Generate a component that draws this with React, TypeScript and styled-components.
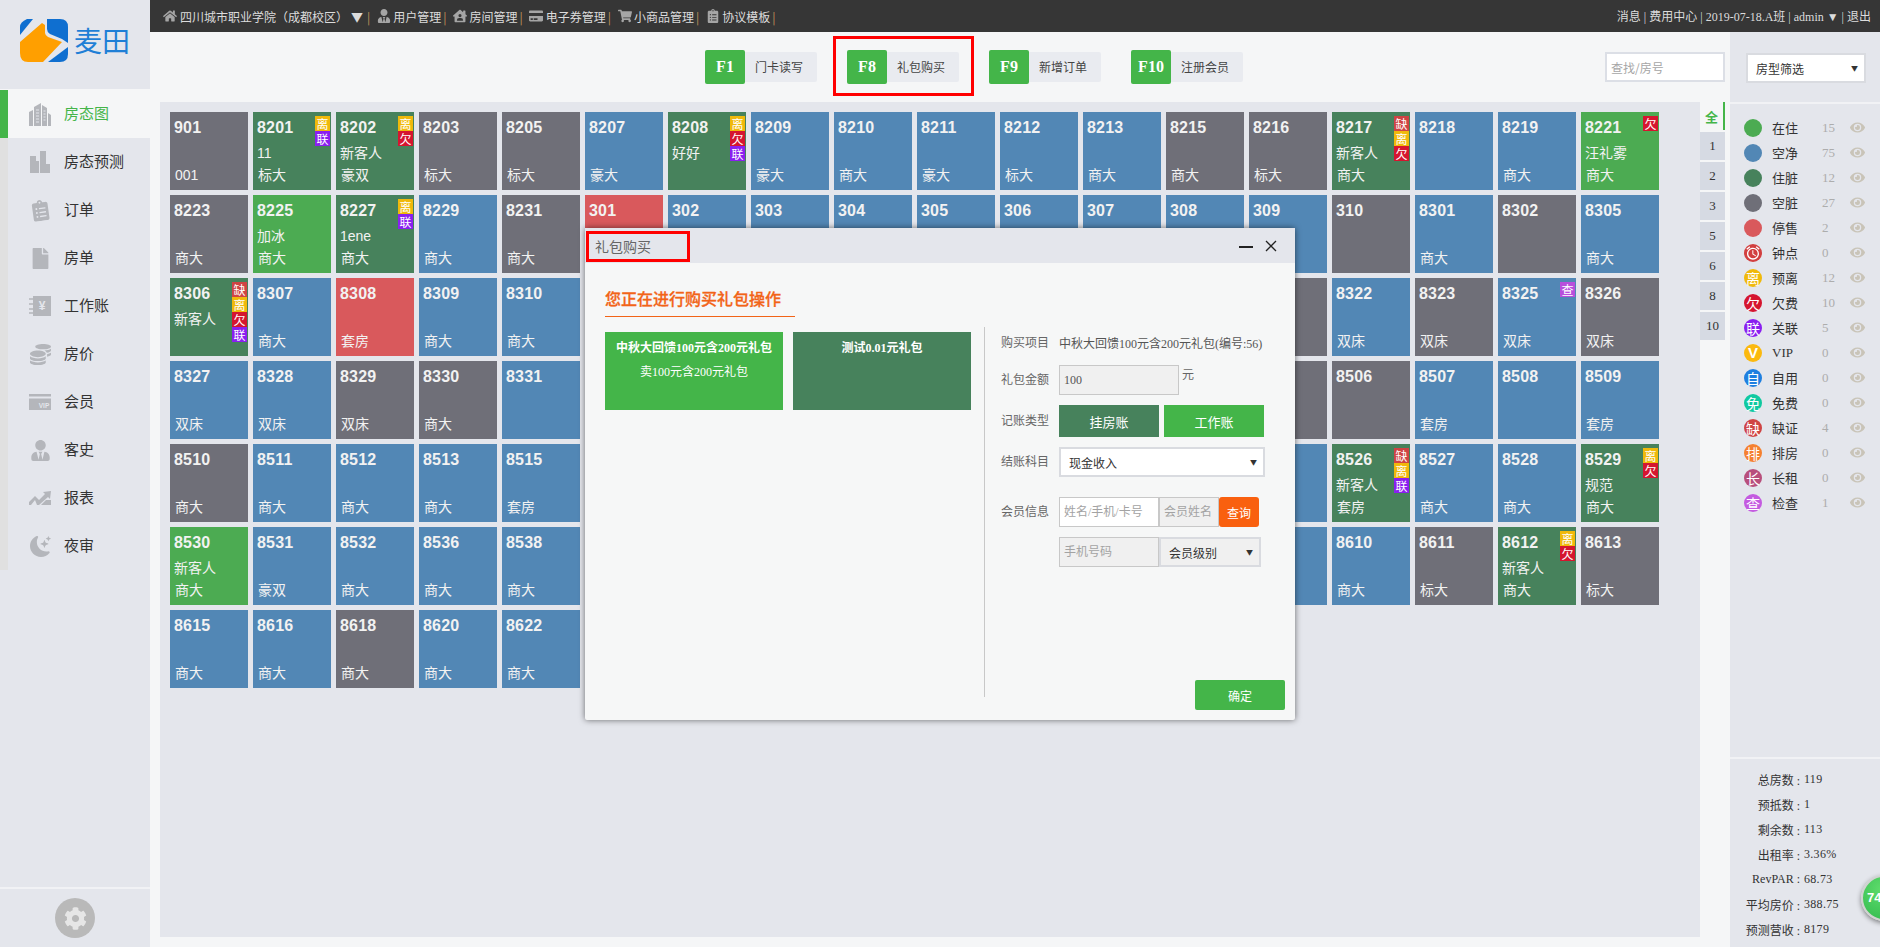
import React from "react";
import styled, { createGlobalStyle } from "styled-components";
import {
  FaHome,
  FaUserTie,
  FaCreditCard,
  FaShoppingCart,
  FaClipboardList,
  FaFile,
  FaCoins,
  FaCog,
  FaEye,
  FaHouseUser,
} from "react-icons/fa";
import { BsMoonStarsFill } from "react-icons/bs";
import { MdAlarm } from "react-icons/md";

const GREEN = "#44b549";
const DARK_GREEN = "#47825c";
const ORANGE = "#f9600f";
const PANEL = "#e4e6ec";
const PAGE = "#f5f6f7";
const CJK = `"Noto Sans CJK SC", sans-serif`;
const SERIF = `"Liberation Serif", "Noto Sans CJK SC", serif`;

const statusColors: Record<string, string> = {
  clean: "#5287b5",
  dirty: "#6f6f78",
  stay: "#47825c",
  live: "#4cab52",
  stop: "#d9595c",
};

const tagColors: Record<string, string> = {
  离: "#f0b90b",
  联: "#8a1ff0",
  欠: "#d5152f",
  缺: "#cf4444",
  查: "#b84fdc",
};

const GlobalStyle = createGlobalStyle`
  html, body {
    margin: 0;
    height: 100%;
    overflow: hidden;
    background: ${PAGE};
    font-family: ${SERIF};
  }
  * { box-sizing: border-box; }
`;

const Page = styled.div`
  display: flex;
  width: 1880px;
  height: 947px;
  position: relative;
  overflow: hidden;
`;

const Sidebar = styled.aside`
  width: 150px;
  flex: none;
  display: flex;
  flex-direction: column;
  background: ${PANEL};
`;

const LogoBox = styled.div`
  height: 90px;
  padding: 19px 0 0 20px;
  display: flex;
  gap: 6px;
  align-items: flex-start;
  border-bottom: 1px solid ${PAGE};
`;

const LogoText = styled.span`
  font-family: ${CJK};
  font-size: 28px;
  line-height: 42px;
  color: #1f7fd6;
`;

const Menu = styled.nav`
  display: flex;
  flex-direction: column;
  border-left: 8px solid #e0e0e0;
`;

const MenuItem = styled.div<{ $active?: boolean }>`
  height: 48px;
  display: flex;
  align-items: center;
  gap: 13px;
  padding-left: 21px;
  margin-left: ${(p) => (p.$active ? "-8px" : "0")};
  border-left: ${(p) => (p.$active ? `8px solid ${GREEN}` : "none")};
  background: ${(p) => (p.$active ? PAGE : "transparent")};
  color: ${(p) => (p.$active ? GREEN : "#333")};
  font-family: ${CJK};
  font-size: 15px;
`;

const MenuIcon = styled.span`
  width: 22px;
  height: 24px;
  display: flex;
  align-items: center;
  justify-content: center;
  color: #b4b6bb;
  font-size: 21px;
`;

const MenuLabel = styled.span`
  padding-bottom: 4px;
`;

const SidebarFoot = styled.div`
  margin-top: auto;
  height: 60px;
  border-top: 2px solid #f1f2f5;
  display: flex;
  justify-content: center;
  padding-top: 9px;
`;

const GearCircle = styled.div`
  width: 40px;
  height: 40px;
  border-radius: 50%;
  background: #b9b9b9;
  color: #e6e6e6;
  font-size: 23px;
  display: flex;
  align-items: center;
  justify-content: center;
`;

const Shell = styled.div`
  flex: 1;
  display: flex;
  flex-direction: column;
  min-width: 0;
`;

const TopBar = styled.header`
  height: 32px;
  flex: none;
  background: #363636;
  color: #dcdcdc;
  font-family: ${CJK};
  font-size: 12px;
  display: flex;
  align-items: center;
  justify-content: space-between;
  padding: 0 9px 0 12px;
`;

const TopGroup = styled.div`
  display: flex;
  align-items: center;
`;

const TopIcon = styled.span<{ $home?: boolean }>`
  width: 15px;
  color: #a5a5a5;
  font-size: 14px;
  display: flex;
  justify-content: center;
  margin-right: ${(p) => (p.$home ? "3px" : "2px")};
`;

const Caret = styled.span`
  margin: 0 2px 0 3px;
  font-size: 12px;
`;

const Bar = styled.span`
  margin: 0 6px 0 2px;
  font-size: 12px;
  color: #c0945a;
`;

const TopRight = styled.span`
  font-family: ${SERIF};
  color: #dcdcdc;
`;

const Body = styled.div`
  flex: 1;
  display: flex;
  min-height: 0;
`;

const Main = styled.main`
  width: 1580px;
  flex: none;
  display: flex;
  flex-direction: column;
`;

const Toolbar = styled.div`
  height: 70px;
  flex: none;
  display: flex;
  align-items: center;
  gap: 30px;
  padding: 0 5px 0 555px;
`;

const KeyButton = styled.div`
  position: relative;
  width: 112px;
  height: 34px;
  display: flex;
  align-items: center;
`;

const KeyCap = styled.span`
  width: 40px;
  height: 34px;
  background: ${GREEN};
  color: #fff;
  font: bold 16px ${SERIF};
  border-radius: 2px;
  display: flex;
  align-items: center;
  justify-content: center;
`;

const KeyLabel = styled.span`
  width: 72px;
  height: 30px;
  padding: 0 4px 2px 0;
  background: #e9ebf0;
  border-radius: 0 2px 2px 0;
  color: #444;
  font-family: ${CJK};
  font-size: 12px;
  display: flex;
  align-items: center;
  justify-content: center;
`;

const RedMark = styled.div`
  position: absolute;
  border: 3px solid #f00;
  pointer-events: none;
`;

const KeyMark = styled(RedMark)`
  left: -14px;
  top: -14px;
  width: 141px;
  height: 60px;
`;

const TitleMark = styled(RedMark)`
  left: 1px;
  top: 3px;
  width: 104px;
  height: 31px;
`;

const SearchInput = styled.input`
  width: 120px;
  height: 30px;
  margin-left: auto;
  border: 2px solid #dcdfe6;
  background: #fff;
  padding: 0 4px;
  font-family: ${CJK};
  font-size: 12px;
  outline: none;
  &::placeholder {
    color: #a6a6a6;
  }
`;

const Content = styled.div`
  flex: 1;
  display: flex;
  padding: 0 5px 10px 10px;
  min-height: 0;
`;

const Board = styled.section`
  width: 1540px;
  flex: none;
  background: ${PANEL};
  padding: 10px;
`;

const TileGrid = styled.div`
  display: grid;
  grid-template-columns: repeat(18, 78px);
  grid-auto-rows: 78px;
  gap: 5px;
`;

const TileBox = styled.div<{ $status: string }>`
  position: relative;
  display: flex;
  flex-direction: column;
  padding: 0 0 6px 4px;
  background: ${(p) => statusColors[p.$status]};
  color: #f2f2f2;
`;

const RoomNo = styled.div`
  font: bold 16px/32px "Liberation Sans", sans-serif;
  letter-spacing: 0.2px;
`;

const Guest = styled.div`
  font: 14px/18px "Liberation Sans", ${CJK};
`;

const RoomType = styled.div`
  margin-top: auto;
  padding-left: 1px;
  font: 14px/18px "Liberation Sans", ${CJK};
`;

const TagStack = styled.div`
  position: absolute;
  top: 4px;
  right: 1px;
  display: flex;
  flex-direction: column;
`;

const Tag = styled.span<{ $name: string }>`
  width: 15px;
  height: 15px;
  background: ${(p) => tagColors[p.$name]};
  color: #fff;
  font: 12px/15px ${CJK};
  text-align: center;
`;

const Floors = styled.div`
  width: 25px;
  display: flex;
  flex-direction: column;
  gap: 2px;
`;

const FloorTab = styled.div<{ $active?: boolean }>`
  height: 28px;
  background: ${(p) => (p.$active ? "transparent" : "#d6dae3")};
  border-right: ${(p) => (p.$active ? `2px solid ${GREEN}` : "none")};
  color: ${(p) => (p.$active ? GREEN : "#333")};
  font: ${(p) => (p.$active ? `bold 13px ${CJK}` : `13px ${SERIF}`)};
  display: flex;
  align-items: center;
  justify-content: center;
`;

const RightPanel = styled.aside`
  flex: 1;
  display: flex;
  flex-direction: column;
  background: ${PANEL};
`;

const FilterBox = styled.div`
  height: 72px;
  flex: none;
  padding: 21px 14px 0 16px;
  border-bottom: 2px solid #f1f2f5;
`;

const FakeSelect = styled.div<{ $w: number; $bg?: string }>`
  width: ${(p) => p.$w}px;
  height: 30px;
  flex: none;
  background: ${(p) => p.$bg || "#fff"};
  border: 2px solid #d9dbe0;
  padding: 0 6px 0 8px;
  color: #333;
  font-family: ${CJK};
  font-size: 12px;
  display: flex;
  align-items: center;
  justify-content: space-between;
`;

const Arrow = styled.span`
  font-size: 7px;
  color: #333;
`;

const Legend = styled.div`
  padding-top: 11px;
  display: flex;
  flex-direction: column;
`;

const LegendRow = styled.div`
  height: 25px;
  display: flex;
  align-items: center;
  padding-left: 14px;
`;

const Dot = styled.span<{ $color: string }>`
  width: 18px;
  height: 18px;
  flex: none;
  border-radius: 50%;
  background: ${(p) => p.$color};
  color: #fff;
  font: 14px/18px ${CJK};
  display: flex;
  align-items: center;
  justify-content: center;
`;

const DotLetter = styled.span`
  font: bold 15px/18px "Liberation Sans", sans-serif;
`;

const LegendName = styled.span`
  width: 50px;
  margin-left: 10px;
  color: #333;
  font-family: ${SERIF};
  font-size: 13px;
`;

const LegendCount = styled.span`
  width: 28px;
  color: #adadad;
  font-size: 13px;
`;

const Eye = styled.span`
  color: #c9c4b8;
  font-size: 15px;
  display: flex;
`;

const Stats = styled.div`
  margin-top: auto;
  height: 190px;
  flex: none;
  border-top: 2px solid #f1f2f5;
  padding-top: 8px;
`;

const StatRow = styled.div`
  height: 25px;
  display: flex;
  align-items: center;
  color: #333;
  font-size: 12px;
`;

const StatLabel = styled.span`
  width: 70px;
  text-align: right;
  white-space: nowrap;
`;

const StatValue = styled.span`
  margin-left: 4px;
  white-space: nowrap;
  letter-spacing: 0.3px;
`;

const FloatBall = styled.div`
  position: absolute;
  left: 1861px;
  top: 875px;
  width: 46px;
  height: 46px;
  border-radius: 50%;
  border: 2px solid #d0d3d0;
  background: radial-gradient(circle at 45% 30%, #5fdc6c, #2fb84c);
  box-shadow: 0 2px 5px rgba(0, 0, 0, 0.45);
  color: #fff;
  font: bold 13px/42px "Liberation Sans", sans-serif;
  padding-left: 4px;
`;

const Modal = styled.div`
  position: absolute;
  left: 585px;
  top: 228px;
  width: 710px;
  height: 492px;
  background: #f6f7f7;
  border-radius: 2px;
  box-shadow: 0 0 6px rgba(0, 0, 0, 0.55);
  display: flex;
  flex-direction: column;
`;

const ModalTitle = styled.div`
  position: relative;
  height: 35px;
  flex: none;
  background: ${PANEL};
  padding: 0 18px 0 10px;
  color: #666;
  font-family: ${CJK};
  font-size: 14px;
  display: flex;
  align-items: center;
  justify-content: space-between;
`;

const WindowButtons = styled.div`
  display: flex;
  align-items: center;
  gap: 12px;
`;

const ModalHeading = styled.div`
  align-self: flex-start;
  width: 190px;
  margin: 23px 0 0 20px;
  padding-bottom: 6px;
  border-bottom: 1px solid #f26418;
  color: #f26418;
  font: 500 16px/24px ${CJK};
  -webkit-text-stroke: 0.3px #f26418;
`;

const ModalColumns = styled.div`
  height: 370px;
  margin-top: 10px;
  flex: none;
  display: flex;
`;

const PackList = styled.div`
  width: 399px;
  flex: none;
  padding: 5px 0 0 20px;
  display: flex;
  gap: 10px;
  align-items: flex-start;
`;

const PackCard = styled.div<{ $bg: string }>`
  width: 178px;
  height: 78px;
  background: ${(p) => p.$bg};
  color: #fff;
  text-align: center;
  font-size: 12px;
  padding-top: 8px;
`;

const PackTitle = styled.div`
  font-weight: bold;
  line-height: 16px;
`;

const PackDesc = styled.div`
  line-height: 16px;
  margin-top: 8px;
`;

const FormColumn = styled.div`
  flex: 1;
  border-left: 1px solid #c8c8c8;
  padding: 6px 0 0 16px;
`;

const FormRow = styled.div<{ $gap?: number }>`
  display: flex;
  align-items: center;
  margin-top: ${(p) => p.$gap ?? 10}px;
  min-height: 20px;
`;

const FormLabel = styled.span`
  width: 58px;
  flex: none;
  padding-bottom: 3px;
  color: #666;
  font-family: ${CJK};
  font-size: 12px;
`;

const FormValue = styled.span`
  color: #555;
  font-size: 12px;
  white-space: nowrap;
`;

const Field = styled.input<{ $w: number; $muted?: boolean }>`
  width: ${(p) => p.$w}px;
  height: 30px;
  flex: none;
  border: 1px solid #c8c8c8;
  background: ${(p) => (p.$muted ? "#f0f0f0" : "#fff")};
  padding: 0 4px;
  font-family: ${SERIF};
  font-size: 12px;
  color: #555;
  outline: none;
  &::placeholder {
    color: #a3a3a3;
  }
`;

const Unit = styled.span`
  align-self: flex-start;
  margin: 0 0 0 3px;
  color: #666;
  font-size: 12px;
`;

const LedgerButton = styled.div<{ $bg: string }>`
  width: 100px;
  height: 32px;
  margin-right: 5px;
  background: ${(p) => p.$bg};
  color: #fff;
  font-family: ${CJK};
  font-size: 13px;
  display: flex;
  align-items: center;
  justify-content: center;
`;

const QueryButton = styled.div`
  width: 40px;
  height: 30px;
  background: ${ORANGE};
  border-radius: 3px;
  color: #fff;
  font-family: ${CJK};
  font-size: 12px;
  display: flex;
  align-items: center;
  justify-content: center;
`;

const ModalFoot = styled.div`
  margin-top: -17px;
  padding-right: 10px;
  display: flex;
  justify-content: flex-end;
`;

const ConfirmButton = styled.div`
  position: relative;
  width: 90px;
  height: 30px;
  background: ${GREEN};
  border-radius: 2px;
  color: #fff;
  font-family: ${CJK};
  font-size: 12px;
  display: flex;
  align-items: center;
  justify-content: center;
`;

type Tile = { no?: string; status: string; guest?: string; type?: string; tags?: string };

const t = (no: string, status: string, guest = "", type = "", tags = ""): Tile => ({
  no,
  status,
  guest,
  type,
  tags,
});

const hidden = (n: number): Tile[] => Array.from({ length: n }, () => ({ status: "clean" }));

const tiles: Tile[] = [
  t("901", "dirty", "", "001"),
  t("8201", "stay", "11", "标大", "离联"),
  t("8202", "stay", "新客人", "豪双", "离欠"),
  t("8203", "dirty", "", "标大"),
  t("8205", "dirty", "", "标大"),
  t("8207", "clean", "", "豪大"),
  t("8208", "stay", "好好", "", "离欠联"),
  t("8209", "clean", "", "豪大"),
  t("8210", "clean", "", "商大"),
  t("8211", "clean", "", "豪大"),
  t("8212", "clean", "", "标大"),
  t("8213", "clean", "", "商大"),
  t("8215", "dirty", "", "商大"),
  t("8216", "dirty", "", "标大"),
  t("8217", "stay", "新客人", "商大", "缺离欠"),
  t("8218", "clean"),
  t("8219", "clean", "", "商大"),
  t("8221", "live", "汪礼雾", "商大", "欠"),

  t("8223", "dirty", "", "商大"),
  t("8225", "live", "加冰", "商大"),
  t("8227", "stay", "1ene", "商大", "离联"),
  t("8229", "clean", "", "商大"),
  t("8231", "dirty", "", "商大"),
  t("301", "stop"),
  t("302", "clean"),
  t("303", "clean"),
  t("304", "clean"),
  t("305", "clean"),
  t("306", "clean"),
  t("307", "clean"),
  t("308", "clean"),
  t("309", "clean"),
  t("310", "dirty"),
  t("8301", "clean", "", "商大"),
  t("8302", "dirty"),
  t("8305", "clean", "", "商大"),

  t("8306", "stay", "新客人", "", "缺离欠联"),
  t("8307", "clean", "", "商大"),
  t("8308", "stop", "", "套房"),
  t("8309", "clean", "", "商大"),
  t("8310", "clean", "", "商大"),
  ...hidden(8),
  { status: "dirty" },
  t("8322", "clean", "", "双床"),
  t("8323", "dirty", "", "双床"),
  t("8325", "clean", "", "双床", "查"),
  t("8326", "dirty", "", "双床"),

  t("8327", "clean", "", "双床"),
  t("8328", "clean", "", "双床"),
  t("8329", "dirty", "", "双床"),
  t("8330", "dirty", "", "商大"),
  t("8331", "clean"),
  ...hidden(8),
  { status: "dirty" },
  t("8506", "dirty"),
  t("8507", "clean", "", "套房"),
  t("8508", "clean"),
  t("8509", "clean", "", "套房"),

  t("8510", "dirty", "", "商大"),
  t("8511", "clean", "", "商大"),
  t("8512", "clean", "", "商大"),
  t("8513", "clean", "", "商大"),
  t("8515", "clean", "", "套房"),
  ...hidden(9),
  t("8526", "stay", "新客人", "套房", "缺离联"),
  t("8527", "clean", "", "商大"),
  t("8528", "clean", "", "商大"),
  t("8529", "stay", "规范", "商大", "离欠"),

  t("8530", "live", "新客人", "商大"),
  t("8531", "clean", "", "豪双"),
  t("8532", "clean", "", "商大"),
  t("8536", "clean", "", "商大"),
  t("8538", "clean", "", "商大"),
  ...hidden(9),
  t("8610", "clean", "", "商大"),
  t("8611", "dirty", "", "标大"),
  t("8612", "stay", "新客人", "商大", "离欠"),
  t("8613", "dirty", "", "标大"),

  t("8615", "clean", "", "商大"),
  t("8616", "clean", "", "商大"),
  t("8618", "dirty", "", "商大"),
  t("8620", "clean", "", "商大"),
  t("8622", "clean", "", "商大"),
];

const legend: { name: string; count: number; color: string; mark?: React.ReactNode }[] = [
  { name: "在住", count: 15, color: "#4cab52" },
  { name: "空净", count: 75, color: "#5287b5" },
  { name: "住脏", count: 12, color: "#47825c" },
  { name: "空脏", count: 27, color: "#6f6f78" },
  { name: "停售", count: 2, color: "#d9595c" },
  { name: "钟点", count: 0, color: "#d23f3f", mark: <MdAlarm size={16} /> },
  { name: "预离", count: 12, color: "#f0b90b", mark: "离" },
  { name: "欠费", count: 10, color: "#d5152f", mark: "欠" },
  { name: "关联", count: 5, color: "#8a1ff0", mark: "联" },
  { name: "VIP", count: 0, color: "#fbb90f", mark: <DotLetter>V</DotLetter> },
  { name: "自用", count: 0, color: "#1e7fe0", mark: "自" },
  { name: "免费", count: 0, color: "#10c9a0", mark: "免" },
  { name: "缺证", count: 4, color: "#cf4444", mark: "缺" },
  { name: "排房", count: 0, color: "#f58030", mark: "排" },
  { name: "长租", count: 0, color: "#b84f7c", mark: "长" },
  { name: "检查", count: 1, color: "#c45be0", mark: "查" },
];

const stats = [
  ["总房数", "119"],
  ["预抵数", "1"],
  ["剩余数", "113"],
  ["出租率", "3.36%"],
  ["RevPAR", "68.73"],
  ["平均房价", "388.75"],
  ["预测营收", "8179"],
];

const Logo = () => (
  <svg width="48" height="43" viewBox="0 0 48 43">
    <path d="M0 16 V8 Q0 3 7 0 H13 Z" fill="#0f6fd0" />
    <path d="M27 0 H40 Q48 0 48 8 V24 L42 20 L30 15 Q27 13 27 10 Z" fill="#0f6fd0" />
    <path d="M48 28 V35 Q48 43 40 43 H28 Z" fill="#0f6fd0" />
    <path
      d="M0 23 L22 4 L25 6 V14 Q25 16 28 18 L42 23 L23 43 H8 Q0 43 0 34 Z"
      fill="#ff9f00"
    />
  </svg>
);

// stepped tower with window slots
const BuildingIcon = () => (
  <svg width="22" height="24" viewBox="0 0 22 24">
    <path d="M0 24 V10 L4 8 V24 Z M5 24 V5 L12 1 V24 Z M13 24 V3 L18 6 V24 Z M19 24 V11 L22 13 V24 Z" fill="currentColor" />
    <path d="M7 8h3M7 11h3M7 14h3M7 17h3M7 20h3M14.5 9h2M14.5 12h2M14.5 15h2M14.5 18h2" stroke="#e4e6ec" strokeWidth="1" />
  </svg>
);

const ForecastIcon = () => (
  <svg width="20" height="22" viewBox="0 0 20 22" fill="currentColor">
    <rect x="0" y="5" width="6" height="17" />
    <rect x="6" y="10" width="3" height="12" />
    <rect x="10" y="0" width="6" height="22" />
    <rect x="16" y="13" width="4" height="9" />
  </svg>
);

const LedgerIcon = () => (
  <svg width="22" height="20" viewBox="0 0 22 20">
    <rect x="4" y="0" width="18" height="20" fill="currentColor" />
    <path d="M0 3h6M0 8h6M0 13h6M0 17h6" stroke="currentColor" strokeWidth="1.5" />
    <text x="13" y="14" textAnchor="middle" fontSize="12" fontWeight="bold" fill="#e4e6ec" fontFamily="Liberation Sans">
      ¥
    </text>
  </svg>
);

const VipIcon = () => (
  <svg width="22" height="16" viewBox="0 0 22 16">
    <rect x="0" y="0" width="22" height="2.5" fill="currentColor" />
    <rect x="0" y="4.5" width="22" height="11.5" fill="currentColor" />
    <text x="15" y="13.5" textAnchor="middle" fontSize="6.5" fontWeight="bold" fill="#e4e6ec" fontFamily="Liberation Sans">
      VIP
    </text>
  </svg>
);

const ReportIcon = () => (
  <svg width="22" height="14" viewBox="0 0 22 14" fill="currentColor">
    <path d="M0 11 L6 5 L10 9 L16 3 L14 1 L22 0 L21 8 L19 6 L10 14 H8 L6 9 L2 14 H0 Z" />
    <path d="M12 14 L17 9 L22 9 V14 Z" />
  </svg>
);

const menu: { label: string; icon: React.ReactNode }[] = [
  { label: "房态图", icon: <BuildingIcon /> },
  { label: "房态预测", icon: <ForecastIcon /> },
  { label: "订单", icon: <FaClipboardList style={{ transform: "rotate(-8deg)" }} /> },
  { label: "房单", icon: <FaFile /> },
  { label: "工作账", icon: <LedgerIcon /> },
  { label: "房价", icon: <FaCoins /> },
  { label: "会员", icon: <VipIcon /> },
  { label: "客史", icon: <FaUserTie /> },
  { label: "报表", icon: <ReportIcon /> },
  { label: "夜审", icon: <BsMoonStarsFill /> },
];

const topLinks: { label: string; icon: React.ReactNode }[] = [
  { label: "用户管理", icon: <FaUserTie /> },
  { label: "房间管理", icon: <FaHouseUser /> },
  { label: "电子券管理", icon: <FaCreditCard /> },
  { label: "小商品管理", icon: <FaShoppingCart /> },
  { label: "协议模板", icon: <FaClipboardList /> },
];

const keys = [
  ["F1", "门卡读写"],
  ["F8", "礼包购买"],
  ["F9", "新增订单"],
  ["F10", "注册会员"],
];

const floors = ["1", "2", "3", "5", "6", "8", "10"];

export default function App() {
  return (
    <Page>
      <GlobalStyle />
      <Sidebar>
        <LogoBox>
          <Logo />
          <LogoText>麦田</LogoText>
        </LogoBox>
        <Menu>
          {menu.map((m, i) => (
            <MenuItem key={m.label} $active={i === 0}>
              <MenuIcon>{m.icon}</MenuIcon>
              <MenuLabel>{m.label}</MenuLabel>
            </MenuItem>
          ))}
        </Menu>
        <SidebarFoot>
          <GearCircle>
            <FaCog />
          </GearCircle>
        </SidebarFoot>
      </Sidebar>

      <Shell>
        <TopBar>
          <TopGroup>
            <TopIcon $home>
              <FaHome />
            </TopIcon>
            四川城市职业学院（成都校区）
            <Caret>▼</Caret>
            <Bar>|</Bar>
            {topLinks.map((l) => (
              <React.Fragment key={l.label}>
                <TopIcon>{l.icon}</TopIcon>
                {l.label}
                <Bar>|</Bar>
              </React.Fragment>
            ))}
          </TopGroup>
          <TopRight>
            消息 | 费用中心 | 2019-07-18.A班 | admin ▼ | 退出
          </TopRight>
        </TopBar>

        <Body>
          <Main>
            <Toolbar>
              {keys.map(([k, label]) => (
                <KeyButton key={k}>
                  <KeyCap>{k}</KeyCap>
                  <KeyLabel>{label}</KeyLabel>
                  {k === "F8" && <KeyMark />}
                </KeyButton>
              ))}
              <SearchInput placeholder="查找/房号" />
            </Toolbar>
            <Content>
              <Board>
                <TileGrid>
                  {tiles.map((tile, i) => (
                    <TileBox key={i} $status={tile.status}>
                      {tile.no && <RoomNo>{tile.no}</RoomNo>}
                      {tile.guest && <Guest>{tile.guest}</Guest>}
                      {tile.type && <RoomType>{tile.type}</RoomType>}
                      {tile.tags && (
                        <TagStack>
                          {tile.tags.split("").map((name) => (
                            <Tag key={name} $name={name}>
                              {name}
                            </Tag>
                          ))}
                        </TagStack>
                      )}
                    </TileBox>
                  ))}
                </TileGrid>
              </Board>
              <Floors>
                <FloorTab $active>全</FloorTab>
                {floors.map((f) => (
                  <FloorTab key={f}>{f}</FloorTab>
                ))}
              </Floors>
            </Content>
          </Main>

          <RightPanel>
            <FilterBox>
              <FakeSelect $w={120}>
                房型筛选
                <Arrow>▼</Arrow>
              </FakeSelect>
            </FilterBox>
            <Legend>
              {legend.map((row) => (
                <LegendRow key={row.name}>
                  <Dot $color={row.color}>{row.mark}</Dot>
                  <LegendName>{row.name}</LegendName>
                  <LegendCount>{row.count}</LegendCount>
                  <Eye>
                    <FaEye />
                  </Eye>
                </LegendRow>
              ))}
            </Legend>
            <Stats>
              {stats.map(([label, value]) => (
                <StatRow key={label}>
                  <StatLabel>{label} :</StatLabel>
                  <StatValue>{value}</StatValue>
                </StatRow>
              ))}
            </Stats>
          </RightPanel>
        </Body>
      </Shell>

      <Modal>
        <ModalTitle>
          礼包购买
          <TitleMark />
          <WindowButtons>
            <svg width="14" height="12" viewBox="0 0 14 12">
              <path d="M0 7h14" stroke="#222" strokeWidth="2" />
            </svg>
            <svg width="12" height="12" viewBox="0 0 12 12">
              <path d="M1 1l10 10M11 1L1 11" stroke="#222" strokeWidth="1.3" />
            </svg>
          </WindowButtons>
        </ModalTitle>
        <ModalHeading>您正在进行购买礼包操作</ModalHeading>
        <ModalColumns>
          <PackList>
            <PackCard $bg={GREEN}>
              <PackTitle>中秋大回馈100元含200元礼包</PackTitle>
              <PackDesc>卖100元含200元礼包</PackDesc>
            </PackCard>
            <PackCard $bg={DARK_GREEN}>
              <PackTitle>测试0.01元礼包</PackTitle>
            </PackCard>
          </PackList>
          <FormColumn>
            <FormRow $gap={0}>
              <FormLabel>购买项目</FormLabel>
              <FormValue>中秋大回馈100元含200元礼包(编号:56)</FormValue>
            </FormRow>
            <FormRow $gap={12}>
              <FormLabel>礼包金额</FormLabel>
              <Field $w={120} $muted defaultValue="100" />
              <Unit>元</Unit>
            </FormRow>
            <FormRow>
              <FormLabel>记账类型</FormLabel>
              <LedgerButton $bg={DARK_GREEN}>挂房账</LedgerButton>
              <LedgerButton $bg={GREEN}>工作账</LedgerButton>
            </FormRow>
            <FormRow>
              <FormLabel>结账科目</FormLabel>
              <FakeSelect $w={206}>
                现金收入
                <Arrow>▼</Arrow>
              </FakeSelect>
            </FormRow>
            <FormRow $gap={20}>
              <FormLabel>会员信息</FormLabel>
              <Field $w={100} placeholder="姓名/手机/卡号" />
              <Field $w={60} $muted placeholder="会员姓名" />
              <QueryButton>查询</QueryButton>
            </FormRow>
            <FormRow>
              <FormLabel />
              <Field $w={100} $muted placeholder="手机号码" />
              <FakeSelect $w={102} $bg="#f0f0f0">
                会员级别
                <Arrow>▼</Arrow>
              </FakeSelect>
            </FormRow>
          </FormColumn>
        </ModalColumns>
        <ModalFoot>
          <ConfirmButton>确定</ConfirmButton>
        </ModalFoot>
      </Modal>

      <FloatBall>74</FloatBall>
    </Page>
  );
}
